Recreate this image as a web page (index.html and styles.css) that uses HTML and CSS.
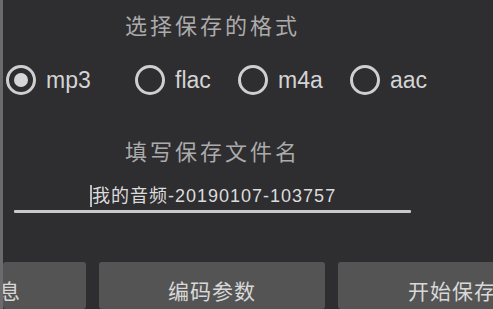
FILE: index.html
```html
<!DOCTYPE html>
<html lang="zh">
<head>
<meta charset="utf-8">
<link rel="stylesheet" href="styles.css">
</head>
<body>
<div class="screen">
  <div class="edge"></div>
  <div class="content">
    <div class="title t1">选择保存的格式</div>
    <div class="radios">
      <div class="opt opt-mp3"><span class="radio checked"></span><span class="lbl">mp3</span></div>
      <div class="opt opt-flac"><span class="radio"></span><span class="lbl">flac</span></div>
      <div class="opt opt-m4a"><span class="radio"></span><span class="lbl">m4a</span></div>
      <div class="opt"><span class="radio"></span><span class="lbl">aac</span></div>
    </div>
    <div class="title t2">填写保存文件名</div>
    <div class="field">
      <div class="value"><span class="caret"></span>我的音频-20190107-103757</div>
      <div class="underline"></div>
    </div>
    <div class="buttons">
      <div class="btn b1"><span class="clip">息</span></div>
      <div class="btn b2">编码参数</div>
      <div class="btn b3">开始保存</div>
    </div>
  </div>
</div>
</body>
</html>
```
FILE: styles.css
```css
html, body {
  margin: 0;
  padding: 0;
}
body {
  width: 493px;
  height: 309px;
  overflow: hidden;
  background: #2e2d30;
  font-family: "Noto Sans CJK SC", "Liberation Sans", sans-serif;
}
.screen {
  display: flex;
  width: 493px;
  height: 309px;
  overflow: hidden;
}
.edge {
  width: 3px;
  flex: none;
  background: #6b6b6d;
  position: relative;
  z-index: 2;
}
.content {
  flex: 1;
  display: flex;
  flex-direction: column;
  min-width: 0;
}
.title {
  color: #ababab;
  font-size: 22px;
  line-height: 28px;
  letter-spacing: 3px;
}
.t1 {
  margin: 10px 0 0 122px;
}
.radios {
  display: flex;
  align-items: center;
  margin: 27px 0 0 3px;
  height: 30px;
}
.opt {
  display: flex;
  align-items: center;
}
.opt-mp3 { width: 129px; }
.opt-flac { width: 103px; }
.opt-m4a { width: 112px; }
.radio {
  box-sizing: border-box;
  width: 30px;
  height: 30px;
  border: 3px solid #cfcfcf;
  border-radius: 50%;
  display: flex;
  align-items: center;
  justify-content: center;
  flex: none;
}
.radio.checked::after {
  content: "";
  width: 14px;
  height: 14px;
  border-radius: 50%;
  background: #d6d6d6;
}
.lbl {
  margin-left: 10px;
  color: #d4d4d4;
  font-family: "Liberation Sans", sans-serif;
  font-size: 23px;
  line-height: 28px;
}
.t2 {
  margin: 41px 0 0 122px;
}
.field {
  margin: 20px 0 0 11px;
  width: 397px;
}
.value {
  margin-left: 76px;
  color: #dcdcdc;
  font-family: "Liberation Sans", "Noto Sans CJK SC", sans-serif;
  font-size: 18px;
  letter-spacing: 1px;
  line-height: 24px;
  display: flex;
  align-items: center;
}
.caret {
  width: 2px;
  height: 22px;
  background: #bdbdbd;
}
.underline {
  margin-top: 2px;
  height: 3px;
  background: #c9c9c9;
  border-radius: 1px;
}
.buttons {
  display: flex;
  gap: 13px;
  margin-top: 49px;
  height: 60px;
}
.btn {
  flex: none;
  background: #545454;
  border-radius: 3px;
  color: #d8d8d8;
  font-size: 21px;
  letter-spacing: 1px;
  display: flex;
  align-items: center;
  justify-content: center;
  padding-top: 8px;
  box-sizing: border-box;
  overflow: hidden;
}
.b1 {
  width: 83px;
  justify-content: flex-start;
}
.clip {
  margin-left: -4px;
}
.b2 {
  width: 226px;
}
.b3 {
  width: 226px;
  justify-content: flex-start;
  padding-left: 70px;
}
```
